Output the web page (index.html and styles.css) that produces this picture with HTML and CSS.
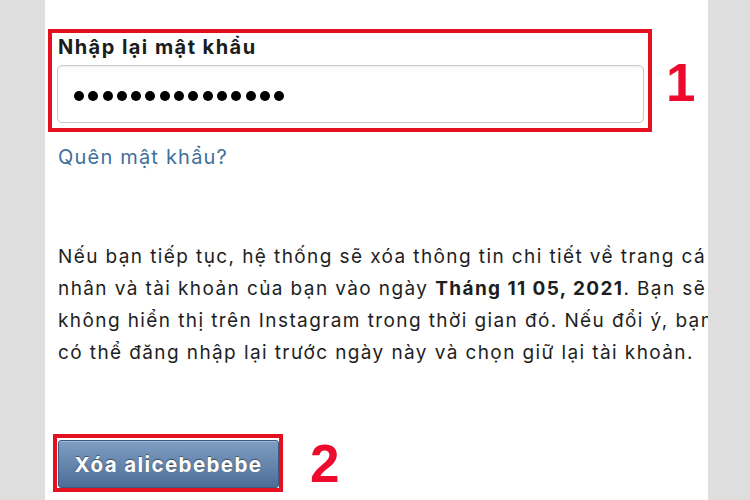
FILE: index.html
```html
<!DOCTYPE html>
<html lang="vi">
<head>
<meta charset="utf-8">
<title>Xóa tài khoản</title>
<link rel="stylesheet" href="styles.css">
</head>
<body>
<main class="panel">
  <div class="field-row">
    <div class="highlight field-box">
      <div class="label">Nhập lại mật khẩu</div>
      <div class="input">
        <span class="dot"></span><span class="dot"></span><span class="dot"></span><span class="dot"></span><span class="dot"></span>
        <span class="dot"></span><span class="dot"></span><span class="dot"></span><span class="dot"></span><span class="dot"></span>
        <span class="dot"></span><span class="dot"></span><span class="dot"></span><span class="dot"></span><span class="dot"></span>
      </div>
    </div>
    <div class="step step-1">1</div>
  </div>
  <a class="forgot">Quên mật khẩu?</a>
  <p class="notice">Nếu bạn tiếp tục, hệ thống sẽ xóa thông tin chi tiết về trang cá<br>nhân và tài khoản của bạn vào ngày <b>Tháng 11 05, 2021</b>. Bạn sẽ<br>không hiển thị trên Instagram trong thời gian đó. Nếu đổi ý, bạn<br>có thể đăng nhập lại trước ngày này và chọn giữ lại tài khoản.</p>
  <div class="button-row">
    <div class="highlight button-box">
      <button class="delete-btn">Xóa alicebebebe</button>
    </div>
    <div class="step step-2">2</div>
  </div>
</main>
</body>
</html>
```
FILE: styles.css
```css
html, body {
  margin: 0;
  padding: 0;
}
body {
  height: 500px;
  background: #dedede;
  display: flex;
  font-family: Inter, "Noto Sans", "Liberation Sans", sans-serif;
  color: #1a1a1a;
}
.panel {
  margin-left: 45px;
  width: 663px;
  height: 500px;
  background: #ffffff;
  overflow: hidden;
  display: flex;
  flex-direction: column;
}
.highlight {
  border: 4px solid #e3101f;
  box-sizing: border-box;
}
.field-row {
  display: flex;
  align-items: center;
  margin-top: 29px;
}
.field-box {
  margin-left: 3px;
  width: 604px;
  height: 103px;
  padding: 4px 4px 5px 5px;
  display: flex;
  flex-direction: column;
}
.label {
  font-weight: 700;
  font-size: 20px;
  line-height: 20px;
  color: #1c1c1c;
  padding-left: 1px;
  letter-spacing: 1.45px;
}
.input {
  margin-top: 8px;
  height: 58px;
  box-sizing: border-box;
  border: 1px solid #c9c9c9;
  border-radius: 5px;
  box-shadow: inset 0 1px 2px rgba(0,0,0,0.08);
  display: flex;
  align-items: center;
  gap: 4.3px;
  padding: 4px 0 0 16px;
}
.dot {
  width: 10px;
  height: 10px;
  border-radius: 50%;
  background: #000;
}
.step {
  font-family: "Liberation Sans", Arial, sans-serif;
  font-weight: 700;
  font-size: 53px;
  line-height: 53px;
  color: #ee0a2c;
}
.step-1 {
  margin-left: 14px;
  margin-top: 4px;
}
.forgot {
  margin-top: 13px;
  padding-left: 13px;
  font-size: 20px;
  line-height: 24px;
  letter-spacing: 1.2px;
  color: #3f6e9a;
}
.notice {
  margin: 72px 0 0 0;
  padding-left: 13px;
  font-size: 19px;
  line-height: 32px;
  letter-spacing: 1.4px;
  white-space: nowrap;
  color: #1e1e1e;
}
.notice b {
  font-weight: 700;
}
.button-row {
  display: flex;
  align-items: center;
  margin-top: 65px;
}
.button-box {
  margin-left: 8px;
  width: 230px;
  height: 58px;
  padding: 2px 0 2px 1px;
  display: flex;
}
.delete-btn {
  width: 221px;
  height: 48px;
  border: 1px solid #3d5c84;
  border-radius: 3px;
  background: linear-gradient(#7f9ec3, #4c6d97);
  box-shadow: inset 0 1px 0 rgba(255,255,255,0.25);
  color: #fff;
  font-family: Inter, "Noto Sans", "Liberation Sans", sans-serif;
  font-weight: 700;
  font-size: 20.5px;
  letter-spacing: 1.4px;
  text-shadow: 0 -1px 1px rgba(0,0,0,0.45);
  padding: 0;
}
.step-2 {
  margin-left: 27px;
}
```
